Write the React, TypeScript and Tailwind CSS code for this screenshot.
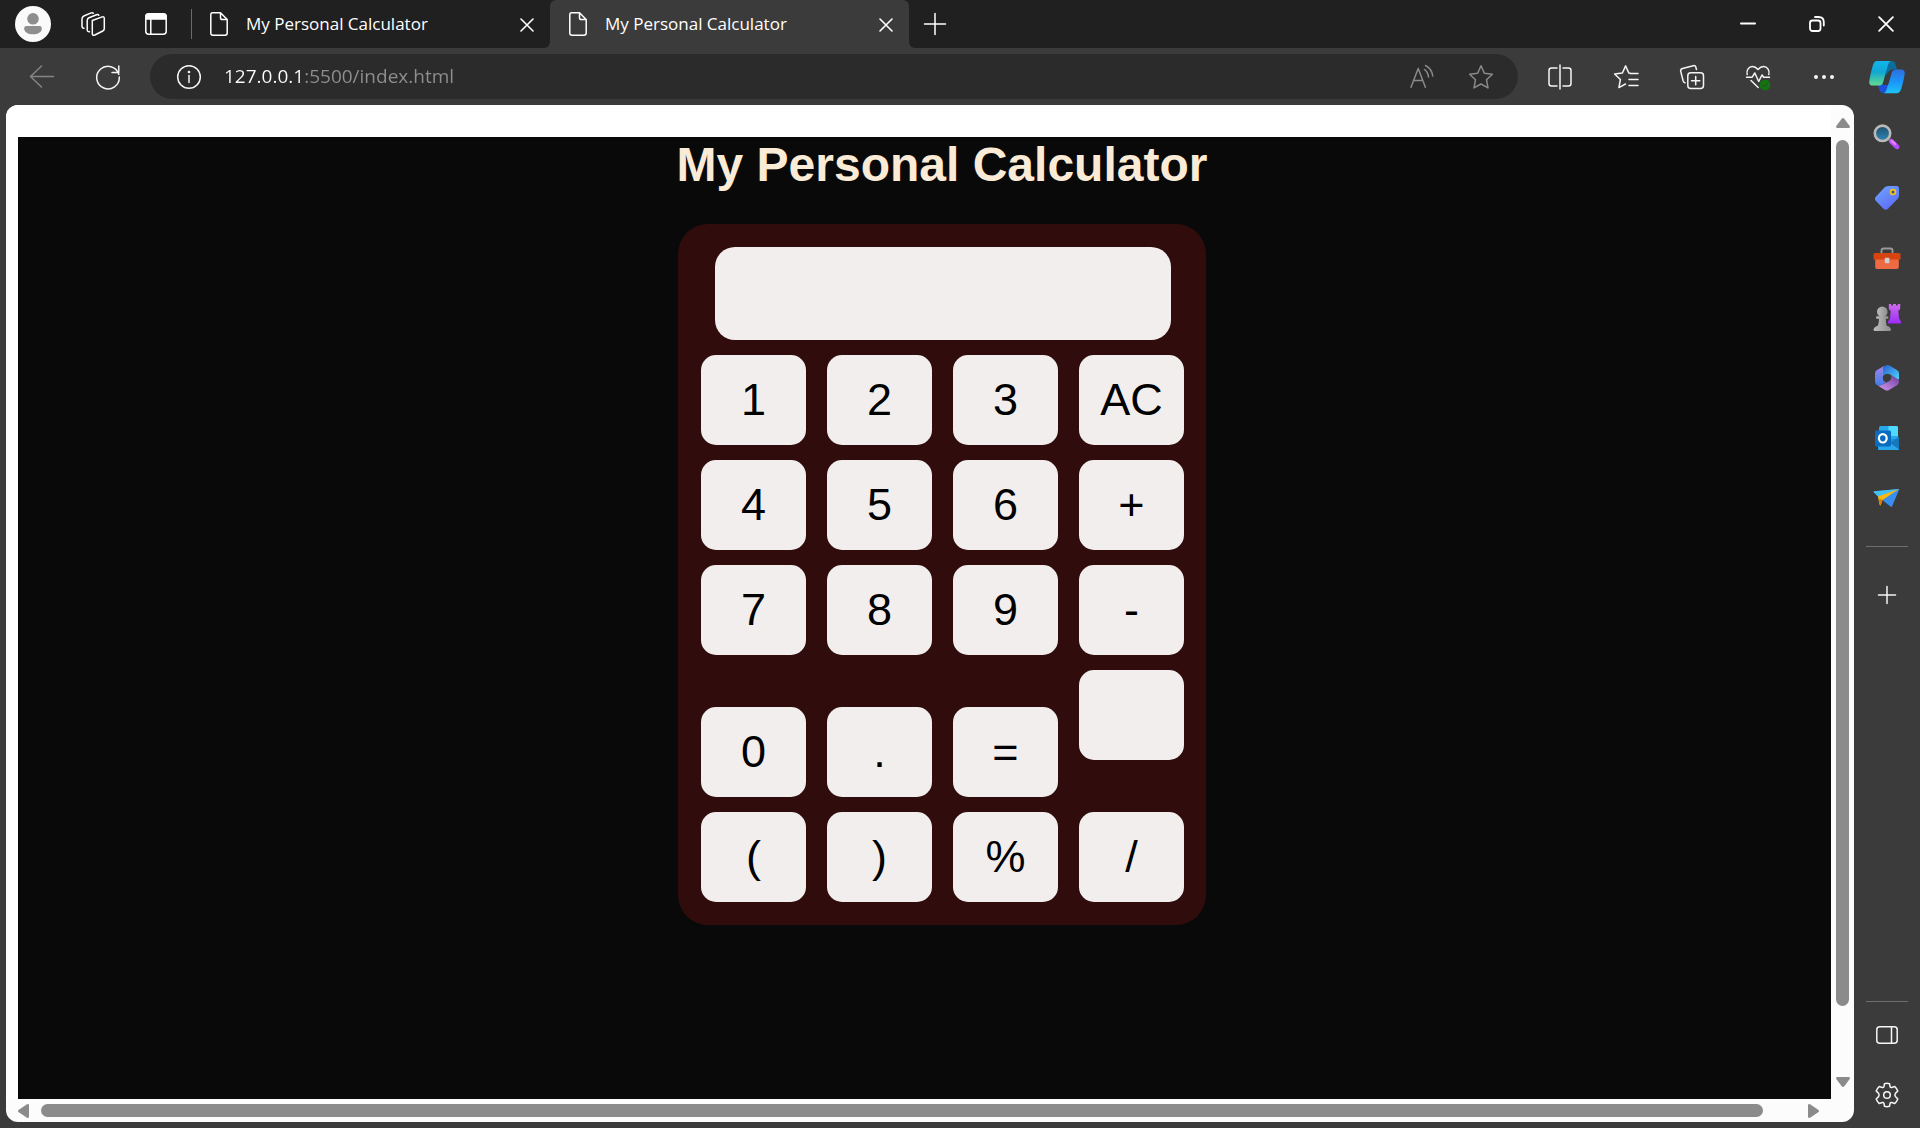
import type { ReactNode } from "react";

const UI_FONT = "font-['Open_Sans','Noto_Sans',sans-serif]";

type IconProps = { children: ReactNode; size?: number; className?: string };

function Icon({ children, size = 26, className = "" }: IconProps) {
  return (
    <svg
      width={size}
      height={size}
      viewBox={`0 0 ${size} ${size}`}
      fill="none"
      stroke="currentColor"
      strokeWidth="1.5"
      strokeLinecap="round"
      strokeLinejoin="round"
      className={`shrink-0 ${className}`}
      aria-hidden="true"
    >
      {children}
    </svg>
  );
}

function FileIcon() {
  return (
    <svg width="20" height="26" viewBox="0 0 20 26" fill="none" stroke="currentColor" strokeWidth="1.5" strokeLinejoin="round" className="shrink-0" aria-hidden="true">
      <path d="M3.5 1.8H11.5L18.2 8.5V22Q18.2 24.2 16 24.2H4Q1.8 24.2 1.8 22V4Q1.8 1.8 3.5 1.8ZM11.5 1.8V6.7Q11.5 8.5 13.3 8.5H18.2" />
    </svg>
  );
}

function CloseIcon({ size = 14 }: { size?: number }) {
  return (
    <svg width={size} height={size} viewBox="0 0 14 14" stroke="currentColor" strokeWidth="1.6" strokeLinecap="round" aria-hidden="true">
      <path d="M1 1 13 13M13 1 1 13" />
    </svg>
  );
}

function TabContent() {
  return (
    <>
      <button className="flex min-w-0 flex-1 items-center gap-[17px] text-left text-white">
        <FileIcon />
        <span className="truncate text-[17px] leading-6">My Personal Calculator</span>
      </button>
      <button aria-label="Close tab" className="pt-0.5 text-white">
        <CloseIcon />
      </button>
    </>
  );
}

function TitleBar() {
  return (
    <header className="flex h-12 bg-[#3b3b3b] text-white">
      <div className="flex items-center rounded-br-md bg-[#202020] pl-[15px]">
        <button aria-label="Profile" className="flex size-9 items-center justify-center rounded-full bg-[#fafafa]">
          <svg width="36" height="36" viewBox="0 0 36 36" fill="#8e8e8e" aria-hidden="true">
            <circle cx="18" cy="12.8" r="5.8" />
            <path d="M11.5 20H24.500Q26.800 20 26.800 22.300C26.800 26.500 23 28.300 18 28.300S9.200 26.500 9.200 22.300Q9.200 20 11.500 20Z" />
          </svg>
        </button>
        <button aria-label="Workspaces" className="ml-[29px]">
          <Icon>
            <path d="M12.300 9.500 22.200 5.900Q24.300 5.300 24.300 7.500V17.500Q24.300 19.300 22.800 20L14.800 24Q12.300 25 12.300 22.500Z" />
            <path d="M9.500 20.800Q7.200 21 7.200 18.500V9.500Q7.200 7.500 9 6.700L16.500 3.700Q18 3.100 18.800 4.200" />
            <path d="M4 17.300Q2 17.300 2 15V8Q2 5.800 3.800 5L11.200 1.900Q12.500 1.400 13.300 2.300" />
          </Icon>
        </button>
        <button aria-label="Tab actions menu" className="ml-[37px]">
          <Icon>
            <rect x="2.800" y="2.800" width="20.400" height="20.400" rx="3" />
            <path d="M3 8V5.500Q3 3 5.500 3H20.500Q23 3 23 5.500V8Z" fill="currentColor" />
            <path d="M7.800 8V23" />
          </Icon>
        </button>
        <div className="ml-[22px] h-[30px] w-px bg-[#6a6a6a]" />
        <div className="flex h-12 w-[358px] items-center pr-4 pl-[17px]">
          <TabContent />
        </div>
      </div>
      <div className="bg-[#202020]">
        <div className="flex h-12 w-[359px] items-center rounded-t-md bg-[#3b3b3b] pr-4 pl-[18px]">
          <TabContent />
        </div>
      </div>
      <div className="flex flex-1 items-center justify-between rounded-bl-md bg-[#202020] pl-[14px]">
        <button aria-label="New tab">
          <Icon size={24}>
            <path d="M12 1.500V22.500M1.500 12H22.500" />
          </Icon>
        </button>
        <div className="flex h-12">
          <button aria-label="Minimize" className="flex w-[69px] items-center justify-center">
            <Icon size={16}>
              <path d="M1 7.500H15" strokeWidth="2" />
            </Icon>
          </button>
          <button aria-label="Restore" className="flex w-[69px] items-center justify-center">
            <Icon size={16}>
              <rect x="1" y="4.500" width="10.500" height="10.500" rx="2.500" strokeWidth="1.800" />
              <path d="M6 1H9.500Q14.800 1 14.800 6.300V9.500" strokeWidth="1.800" />
            </Icon>
          </button>
          <button aria-label="Close window" className="flex w-[69px] items-center justify-center">
            <CloseIcon size={16} />
          </button>
        </div>
      </div>
    </header>
  );
}

function CopilotIcon() {
  return (
    <svg width="36" height="34" viewBox="0 0 36 34" aria-hidden="true">
      <defs>
        <linearGradient id="cpA" x1="0" y1="0" x2="0" y2="1">
          <stop offset="0" stopColor="#12b5ee" />
          <stop offset=".45" stopColor="#11a6d4" />
          <stop offset="1" stopColor="#62dc8c" />
        </linearGradient>
        <linearGradient id="cpB" x1="0" y1="0" x2="0" y2="1">
          <stop offset="0" stopColor="#2f6fdc" />
          <stop offset=".5" stopColor="#1b93fb" />
          <stop offset="1" stopColor="#1cc3f5" />
        </linearGradient>
      </defs>
      <path d="M17 1H23Q25.500 1 26.400 4L28 9.500H23Q20.500 9.500 19.500 12L17 18Z" fill="#0b6d9c" />
      <path d="M8.500 24H16L19 17 19.500 33H14.500Q11.500 33 10.500 30Z" fill="#1d4fd8" />
      <path d="M8 1H21.500Q19.800 2 19 5L14.500 21Q13.500 25.500 10 25.500H4Q-.6 25.500.4 20.500C1.300 15 2.500 10 4 5Q5.200 1 8 1Z" fill="url(#cpA)" />
      <path d="M27 9.500H32Q36.500 9.500 35.500 15C34.700 20 33.500 25 32 29.500Q30.800 33.200 27.500 33.200H14.800Q16.800 32.500 17.600 29.500L22.500 13Q23.500 9.500 27 9.500Z" fill="url(#cpB)" />
      <path d="M22.500 13 19 25H14.500L18 13Z" fill="#3b3b3b" />
    </svg>
  );
}

function Toolbar() {
  return (
    <nav aria-label="Browser toolbar" className="flex h-[57px] items-center bg-[#3b3b3b] pr-[15px] pl-[29px] text-[#f5f5f5]">
      <button aria-label="Back" className="text-[#858585]">
        <Icon>
          <path d="M24.500 12.500H1.500M12.500 2 1.500 12.500 12.500 23" />
        </Icon>
      </button>
      <button aria-label="Refresh" className="ml-10">
        <Icon>
          <path d="M23.800 10.200A11.300 11.300 0 1 0 24.300 13M23.800 2V8.500H17" />
        </Icon>
      </button>
      <div className="ml-[29px] flex h-[45px] min-w-0 flex-1 items-center rounded-full bg-[#2b2b2b] pr-6 pl-[26px]">
        <button aria-label="View site information">
          <Icon>
            <circle cx="13" cy="13" r="11.300" />
            <path d="M13 11.500V18.500" />
            <circle cx="13" cy="8" r=".6" fill="currentColor" />
          </Icon>
        </button>
        <input
          type="text"
          aria-label="Address bar"
          defaultValue="127.0.0.1:5500/index.html"
          className="ml-[22px] h-8 min-w-0 flex-1 bg-linear-to-r from-white from-[81px] to-[#8f8f8f] to-[81px] bg-clip-text pb-0.5 text-[19px] leading-[30px] text-transparent outline-none"
        />
        <button aria-label="Read aloud" className="text-[#8a8a8a]">
          <Icon>
            <path d="M2 23.200 9.200 4.500 16.400 23.200M4.700 16.500H13.700M15.500 5.500Q19 8 19.500 13M16.500 1.500Q22.700 4.500 23.800 12" />
          </Icon>
        </button>
        <button aria-label="Add to favorites" className="ml-[33px] text-[#8a8a8a]">
          <Icon>
            <path d="M13 1.800 16.400 9.200 24.400 10.200 18.500 15.700 20 23.900 13 20 6 23.900 7.500 15.700 1.600 10.200 9.600 9.200Z" />
          </Icon>
        </button>
      </div>
      <div className="ml-[29px] flex items-center gap-10">
        <button aria-label="Split screen">
          <Icon>
            <path d="M10 4H4.500Q2 4 2 6.500V19.500Q2 22 4.500 22H10M16 4H21.500Q24 4 24 6.500V19.500Q24 22 21.500 22H16M13 1V25" />
          </Icon>
        </button>
        <button aria-label="Favorites">
          <Icon>
            <path d="M17.500 9.300 15.800 9 12.600 1.900 9.400 9 1.600 10 7.400 15.500 5.900 23.600 12.500 20M17 9.500H25M16 15.500H25M16 21.500H25" />
          </Icon>
        </button>
        <button aria-label="Collections">
          <Icon>
            <rect x="8.800" y="8.800" width="15.700" height="15.700" rx="3" />
            <path d="M16.700 12.500V20.800M12.500 16.700H20.800M17.500 5.500 16.800 3Q16.200 1.200 14.300 1.700L3.500 4.500Q1.200 5.200 1.700 7.300L4.200 17Q4.700 18.600 6 18.800" />
          </Icon>
        </button>
        <button aria-label="Browser essentials">
          <Icon>
            <path d="M2.200 10.500C1 6 4 2.500 7.300 2.500Q10.500 2.500 13 5.500 15.500 2.500 18.700 2.500C22 2.500 25 6 23.800 10.500M1.500 13.300H7L9.800 9 13.700 17.500 17 11 18.700 13.300H24.500M6 16.500 13.200 23.500" />
            <circle cx="20" cy="21" r="5.400" fill="#12740f" stroke="none" />
            <path d="M17.700 21.200 19.300 22.800 22.400 19.600" strokeWidth="1" stroke="#3b3b3b" />
          </Icon>
        </button>
        <button aria-label="Settings and more">
          <Icon>
            <g fill="currentColor" stroke="none">
              <circle cx="5" cy="13" r="2" />
              <circle cx="13" cy="13" r="2" />
              <circle cx="21" cy="13" r="2" />
            </g>
          </Icon>
        </button>
      </div>
      <button aria-label="Copilot" className="ml-8">
        <CopilotIcon />
      </button>
    </nav>
  );
}

const KEYS = [
  "1", "2", "3", "AC",
  "4", "5", "6", "+",
  "7", "8", "9", "-",
  "0", ".", "=", "",
  "(", ")", "%", "/",
];

function Calculator() {
  return (
    <section aria-label="Calculator" className="mt-8 flex flex-col items-center gap-[15px] rounded-[30px] bg-[#300c0c] py-[23px] pr-[22px] pl-[23px]">
      <input
        type="text"
        aria-label="Display"
        className="h-[93px] w-[456px] rounded-[20px] bg-[#f2eeed] px-5 text-right text-[45px] text-black outline-none"
      />
      <div className="grid grid-cols-[repeat(4,105px)] grid-rows-[90px_90px_90px_127px_90px] items-end gap-x-[21px] gap-y-[15px]">
        {KEYS.map((key) => (
          <button
            key={key}
            aria-label={key === "" ? "Blank" : undefined}
            className={`h-[90px] rounded-[15px] bg-[#f2eeed] text-[45px] leading-[52px] text-black ${key === "" ? "self-start" : ""}`}
          >
            {key}
          </button>
        ))}
      </div>
    </section>
  );
}

function PageView() {
  return (
    <main className="grid min-w-0 flex-1 grid-cols-[minmax(0,1fr)_23px] grid-rows-[1fr_23px] overflow-hidden rounded-xl bg-[#fcfcfc]">
      <div className="flex bg-white pt-8 pl-3">
        <div className="flex flex-1 flex-col items-center bg-[#090909] pl-[35px] font-['Liberation_Sans',Arial,sans-serif]">
          <h1 className="text-5xl leading-[55px] font-bold text-[#faebd7]">My Personal Calculator</h1>
          <Calculator />
        </div>
      </div>
      <div className="flex flex-col items-center pt-[13px] pb-3">
        <svg width="14" height="10" viewBox="0 0 14 10" fill="#8b8b8b" aria-hidden="true">
          <path d="M5.700.8Q7-.8 8.300.8L13.700 8Q14.500 10 12.500 10H1.500Q-.5 10 .3 8Z" />
        </svg>
        <div className="mt-3 w-[13px] grow-[866] rounded-full bg-[#8b8b8b]" />
        <div className="grow-[71]" />
        <svg width="14" height="10" viewBox="0 0 14 10" fill="#8b8b8b" aria-hidden="true">
          <path d="M5.700 9.200Q7 10.800 8.300 9.200L13.700 2Q14.500 0 12.500 0H1.500Q-.5 0 .3 2Z" />
        </svg>
      </div>
      <div className="flex items-center pr-3 pl-3">
        <svg width="11" height="14" viewBox="0 0 11 14" fill="#8b8b8b" aria-hidden="true">
          <path d="M.8 5.700Q-.8 7 .8 8.300L9 13.700Q11 14.500 11 12.500V1.500Q11-.5 9 .3Z" />
        </svg>
        <div className="ml-3 h-[13px] grow-[1722] rounded-full bg-[#8b8b8b]" />
        <div className="grow-[45]" />
        <svg width="11" height="14" viewBox="0 0 11 14" fill="#8b8b8b" aria-hidden="true">
          <path d="M10.200 5.700Q11.800 7 10.200 8.300L2 13.700Q0 14.500 0 12.500V1.500Q0-.5 2 .3Z" />
        </svg>
      </div>
    </main>
  );
}

function ColorIcon({ children }: { children: ReactNode }) {
  return (
    <svg width="28" height="28" viewBox="0 0 28 28" aria-hidden="true">
      {children}
    </svg>
  );
}

const SIDE_APPS: { label: string; icon: ReactNode }[] = [
  {
    label: "Search",
    icon: (
      <ColorIcon>
        <defs>
          <linearGradient id="lens" x1="0" y1="0" x2="0" y2="1">
            <stop offset="0" stopColor="#1f4f6b" />
            <stop offset="1" stopColor="#2f86b8" />
          </linearGradient>
        </defs>
        <path d="M16.500 15.500 19 18" stroke="#8d8d8d" strokeWidth="3" />
        <path d="M18.500 17.500 24 22.700" stroke="#b44dfa" strokeWidth="5" strokeLinecap="round" />
        <path d="M18.800 17 22 20" stroke="#e77bfa" strokeWidth="2.500" strokeLinecap="round" />
        <circle cx="9.500" cy="9.300" r="7.700" fill="url(#lens)" stroke="#bdb9b6" strokeWidth="2.600" />
      </ColorIcon>
    ),
  },
  {
    label: "Shopping",
    icon: (
      <ColorIcon>
        <defs>
          <linearGradient id="tag" x1="0" y1="0" x2=".6" y2="1">
            <stop offset="0" stopColor="#6fa8ff" />
            <stop offset="1" stopColor="#5e6cf6" />
          </linearGradient>
        </defs>
        <path d="M15 2H23.500Q26 2 26 4.500V11.500Q26 13.500 24.500 15L15 24.700Q12.800 27 10.500 24.700L3 17Q.8 14.800 3 12.500L11.500 3.500Q13 2 15 2Z" fill="url(#tag)" />
        <circle cx="20" cy="8" r="2.400" fill="#3f4f9a" stroke="#f5c614" strokeWidth="1.700" />
      </ColorIcon>
    ),
  },
  {
    label: "Tools",
    icon: (
      <ColorIcon>
        <path d="M8.500 9V6.500Q8.500 4.500 10.500 4.500H17.500Q19.500 4.500 19.500 6.500V9" fill="none" stroke="#9a9a9a" strokeWidth="1.800" />
        <path d="M2.200 15H25.800V23Q25.800 25 23.800 25H4.200Q2.200 25 2.200 23Z" fill="#ee6a42" />
        <path d="M1.800 9H26.200Q27.500 9 27.500 10.500V15.500H.5V10.500Q.5 9 1.800 9Z" fill="#d64410" />
        <rect x="11.800" y="13.800" width="4.600" height="5.400" rx=".8" fill="#cfcfcf" />
      </ColorIcon>
    ),
  },
  {
    label: "Games",
    icon: (
      <ColorIcon>
        <defs>
          <linearGradient id="rook" x1="0" y1="0" x2="0" y2="1">
            <stop offset="0" stopColor="#cf6bf0" />
            <stop offset="1" stopColor="#9a2cf5" />
          </linearGradient>
          <linearGradient id="pawn" x1="0" y1="0" x2="1" y2="0">
            <stop offset="0" stopColor="#bcbcbc" />
            <stop offset="1" stopColor="#8d8d8d" />
          </linearGradient>
        </defs>
        <path d="M15.800 0H18.200V1.500H20V0H23V1.500H24.800V0H27.200V4.500Q27.200 6 25.300 6.800L26 14.500 28 17.500V19.500H15V17.500L17 14.500 17.700 6.800Q15.800 6 15.800 4.500Z" fill="url(#rook)" />
        <g fill="url(#pawn)">
          <circle cx="9.300" cy="7.700" r="5.300" />
          <path d="M3.500 12.200H15Q16 13.500 15 14.700H12.800Q12.800 19.500 14 22.500H4.500Q6 19.500 6 14.700H3.500Q2.500 13.500 3.500 12.200Z" />
          <path d="M3.800 22H15Q18 23.500 18 25.500 18 27 16.500 27H2Q.5 27 .5 25.500.5 23.500 3.800 22Z" />
        </g>
      </ColorIcon>
    ),
  },
  {
    label: "Microsoft 365",
    icon: (
      <ColorIcon>
        <defs>
          <linearGradient id="msL" x1="0" y1="0" x2="0" y2="1">
            <stop offset="0" stopColor="#a384e8" />
            <stop offset="1" stopColor="#3f7fe6" />
          </linearGradient>
          <linearGradient id="msR" x1="0" y1="0" x2="1" y2="1">
            <stop offset="0" stopColor="#2760cf" />
            <stop offset="1" stopColor="#4fd2fa" />
          </linearGradient>
          <linearGradient id="msB" x1="0" y1="1" x2="1" y2="0">
            <stop offset="0" stopColor="#d79af5" />
            <stop offset="1" stopColor="#6a3d99" />
          </linearGradient>
        </defs>
        <path d="M11 2 4 6Q2 7.200 2 9.500V17.500Q2 19.800 4 21 6 22.300 8.500 21L13 18.500Q9.500 17 9.800 13L11 10.500Z" fill="url(#msL)" />
        <path d="M10 3Q14 0 16.500 1.500L24 6Q26 7.200 26 9.500V14.500Q26 16 24.500 15.200L17 10.500Q14 8.800 10 11.500Z" fill="url(#msR)" />
        <path d="M26 15V17.500Q26 20 24 21.200L16 26Q14 27.200 12 26L5 21.700Q7 22 9 20.800L16 17.300Q18.800 15.800 18.300 11.300L24 14.900Q25.500 15.700 26 15Z" fill="url(#msB)" />
      </ColorIcon>
    ),
  },
  {
    label: "Outlook",
    icon: (
      <ColorIcon>
        <rect x="6" y="2" width="19" height="16" rx="1.500" fill="#28a8ea" />
        <path d="M15.500 2H23.500Q25 2 25 3.500V12H15.500Z" fill="#50d9ff" />
        <path d="M5 15H26V26H6.500Q5 26 5 24.500Z" fill="#1490df" />
        <path d="M26 12.500V25.500L17.500 19Z" fill="#1976b8" />
        <path d="M5 22 17 19 26 25.500Q25.500 26 24.500 26H6.500Q5 26 5 24.500Z" fill="#28a8ea" />
        <rect x="2" y="6.500" width="16" height="16" rx="1.500" fill="#0a6cc0" />
        <ellipse cx="9.800" cy="14.300" rx="3.900" ry="4.200" fill="none" stroke="#fff" strokeWidth="2.200" />
      </ColorIcon>
    ),
  },
  {
    label: "Drop",
    icon: (
      <ColorIcon>
        <path d="M.5 7.500 26 5Q26.500 5 26 6L19 22.500Q18.500 23.300 17.500 22.500L5.500 13Z" fill="#3a8ef0" />
        <path d="M.8 7.300 26 5 5.500 13 1 8.500Q.2 7.500.8 7.300Z" fill="#43c1f5" />
        <path d="M26 5 5 12.500 6.500 20.500Q7.300 22.300 8 20.500L9.500 16Z" fill="#fbb90f" />
        <path d="M9.500 15.500 7.500 21.500Q6 19 5.500 15Z" fill="#d98000" />
      </ColorIcon>
    ),
  },
];

function SideButton({ label, children }: { label: string; children: ReactNode }) {
  return (
    <button aria-label={label} className="flex h-[60px] w-full items-center justify-center">
      {children}
    </button>
  );
}

function Sidebar() {
  return (
    <aside aria-label="Sidebar" className="flex w-[66px] flex-col items-center pt-[3px] pb-[3px] text-[#f5f5f5]">
      {SIDE_APPS.map((app) => (
        <SideButton key={app.label} label={app.label}>
          {app.icon}
        </SideButton>
      ))}
      <div className="mt-[18px] h-px w-[42px] bg-[#6e6e6e]" />
      <div className="mt-[18px] w-full">
        <SideButton label="Customize sidebar">
          <Icon size={20}>
            <path d="M10 1.500V18.500M1.500 10H18.500" />
          </Icon>
        </SideButton>
      </div>
      <div className="mt-auto h-px w-[42px] bg-[#6e6e6e]" />
      <div className="mt-[3px] w-full">
        <SideButton label="Toggle sidebar">
          <Icon>
            <rect x="2.800" y="4.800" width="20.400" height="16.400" rx="3" />
            <path d="M17.500 5V21" />
          </Icon>
        </SideButton>
        <SideButton label="Settings">
          <Icon>
            <circle cx="13" cy="13" r="3.300" />
            <path d="M10.500 1.700Q13 1 15.500 1.700L16.100 4.800Q16.500 5.800 17.700 5.500L20.800 4.500Q22.700 6.300 23.800 9L21.400 11.400Q20.400 13 21.400 14.500L23.800 17Q22.800 19.700 20.800 21.500L17.700 20.500Q16.500 20.200 16.100 21.200L15.500 24.300Q13 25 10.500 24.300L9.900 21.200Q9.500 20.200 8.300 20.500L5.200 21.500Q3.200 19.700 2.200 17L4.600 14.600Q5.600 13 4.600 11.400L2.200 9Q3.200 6.300 5.200 4.500L8.300 5.500Q9.500 5.800 9.900 4.800Z" />
          </Icon>
        </SideButton>
      </div>
    </aside>
  );
}

export default function App() {
  return (
    <div className={`flex min-h-screen flex-col bg-[#3b3b3b] ${UI_FONT}`}>
      <TitleBar />
      <Toolbar />
      <div className="flex flex-1">
        <div className="flex min-w-0 flex-1 pb-1.5 pl-1.5">
          <PageView />
        </div>
        <Sidebar />
      </div>
    </div>
  );
}
